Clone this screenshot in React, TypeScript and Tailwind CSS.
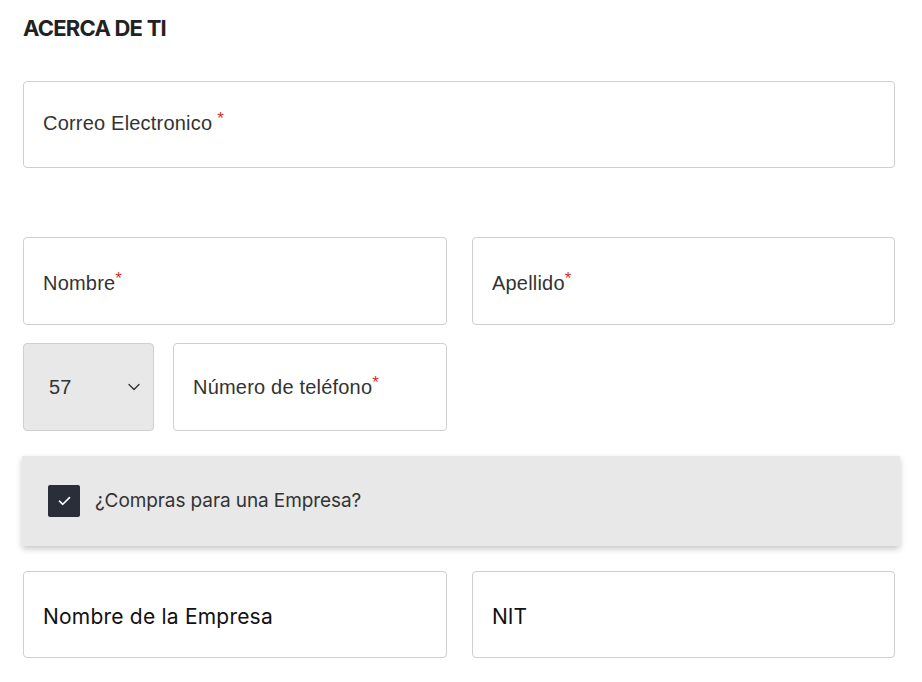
import { ChevronDown } from 'lucide-react';

// Form section "Acerca de ti": labelled boxes laid out on a two-column grid.
const box = 'rounded-[4px] border border-[#cfcfcf] bg-white flex items-center';
const label = "text-[20px] text-[#333] tracking-[0.01em] font-['Liberation_Sans',Arial,sans-serif]";

function Field({ text, required = true, className = '' }: { text: string; required?: boolean; className?: string }) {
  return (
    <div className={`${box} h-[88px] px-[19px] ${className}`}>
      <span className={label}>
        {text}
        {required && <span className="text-[#d9302a] text-[17px] align-top relative -top-[2px]">*</span>}
      </span>
    </div>
  );
}

export default function App() {
  return (
    <div className="w-[922px] min-h-[682px] bg-white px-[23px] pt-[15px] font-['Inter',sans-serif]">
      <h2 className="text-[22px] font-bold tracking-[-0.035em] text-[#222] leading-[27px]">ACERCA DE TI</h2>

      <div className={`${box} h-[87px] px-[19px] mt-[39px] w-[872px]`}>
        <span className={`${label} relative -top-[2px]`}>
          Correo Electronico
          <span className="text-[#d9302a] text-[17px] align-top relative -top-[2px] ml-[5px]">*</span>
        </span>
      </div>

      <div className="mt-[69px] grid grid-cols-[424px_423px] gap-x-[25px] gap-y-[18px] w-[872px]">
        <Field text="Nombre" className="pt-[3px]" />
        <Field text="Apellido" className="pt-[3px]" />
        <div className="flex gap-[19px]">
          <div className={`${box} h-[88px] !bg-[#e8e8e8] w-[131px] justify-between pl-[25px] pr-[9px]`}>
            <span className={label}>57</span>
            <ChevronDown size={20} strokeWidth={1.6} className="text-[#333]" />
          </div>
          <Field text="Número de teléfono" className="flex-1" />
        </div>
      </div>

      <div className="mt-[25px] -mx-[1px] h-[90px] bg-[#e8e8e8] shadow-[0_3px_6px_rgba(0,0,0,0.22)] flex items-center pl-[26px] gap-[15px]">
        <span className="w-[32px] h-[32px] rounded-[2px] bg-[#2a2e38] flex items-center justify-center">
          <svg width="13" height="10" viewBox="0 0 13 10" fill="none">
            <path d="M1.5 5.2 L4.8 8.3 L11.5 1.6" stroke="white" strokeWidth="1.6" strokeLinecap="round" strokeLinejoin="round" />
          </svg>
        </span>
        <span className="text-[19px] text-[#333] tracking-[-0.005em]">¿Compras para una Empresa?</span>
      </div>

      <div className="mt-[25px] grid grid-cols-[424px_423px] gap-x-[25px] w-[872px]">
        <div className={`${box} h-[87px] px-[19px] pt-[5px]`}>
          <span className="text-[21px] text-[#111] tracking-[0.01em]">Nombre de la Empresa</span>
        </div>
        <div className={`${box} h-[87px] px-[19px] pt-[5px]`}>
          <span className="text-[21px] text-[#111]">NIT</span>
        </div>
      </div>
    </div>
  );
}
